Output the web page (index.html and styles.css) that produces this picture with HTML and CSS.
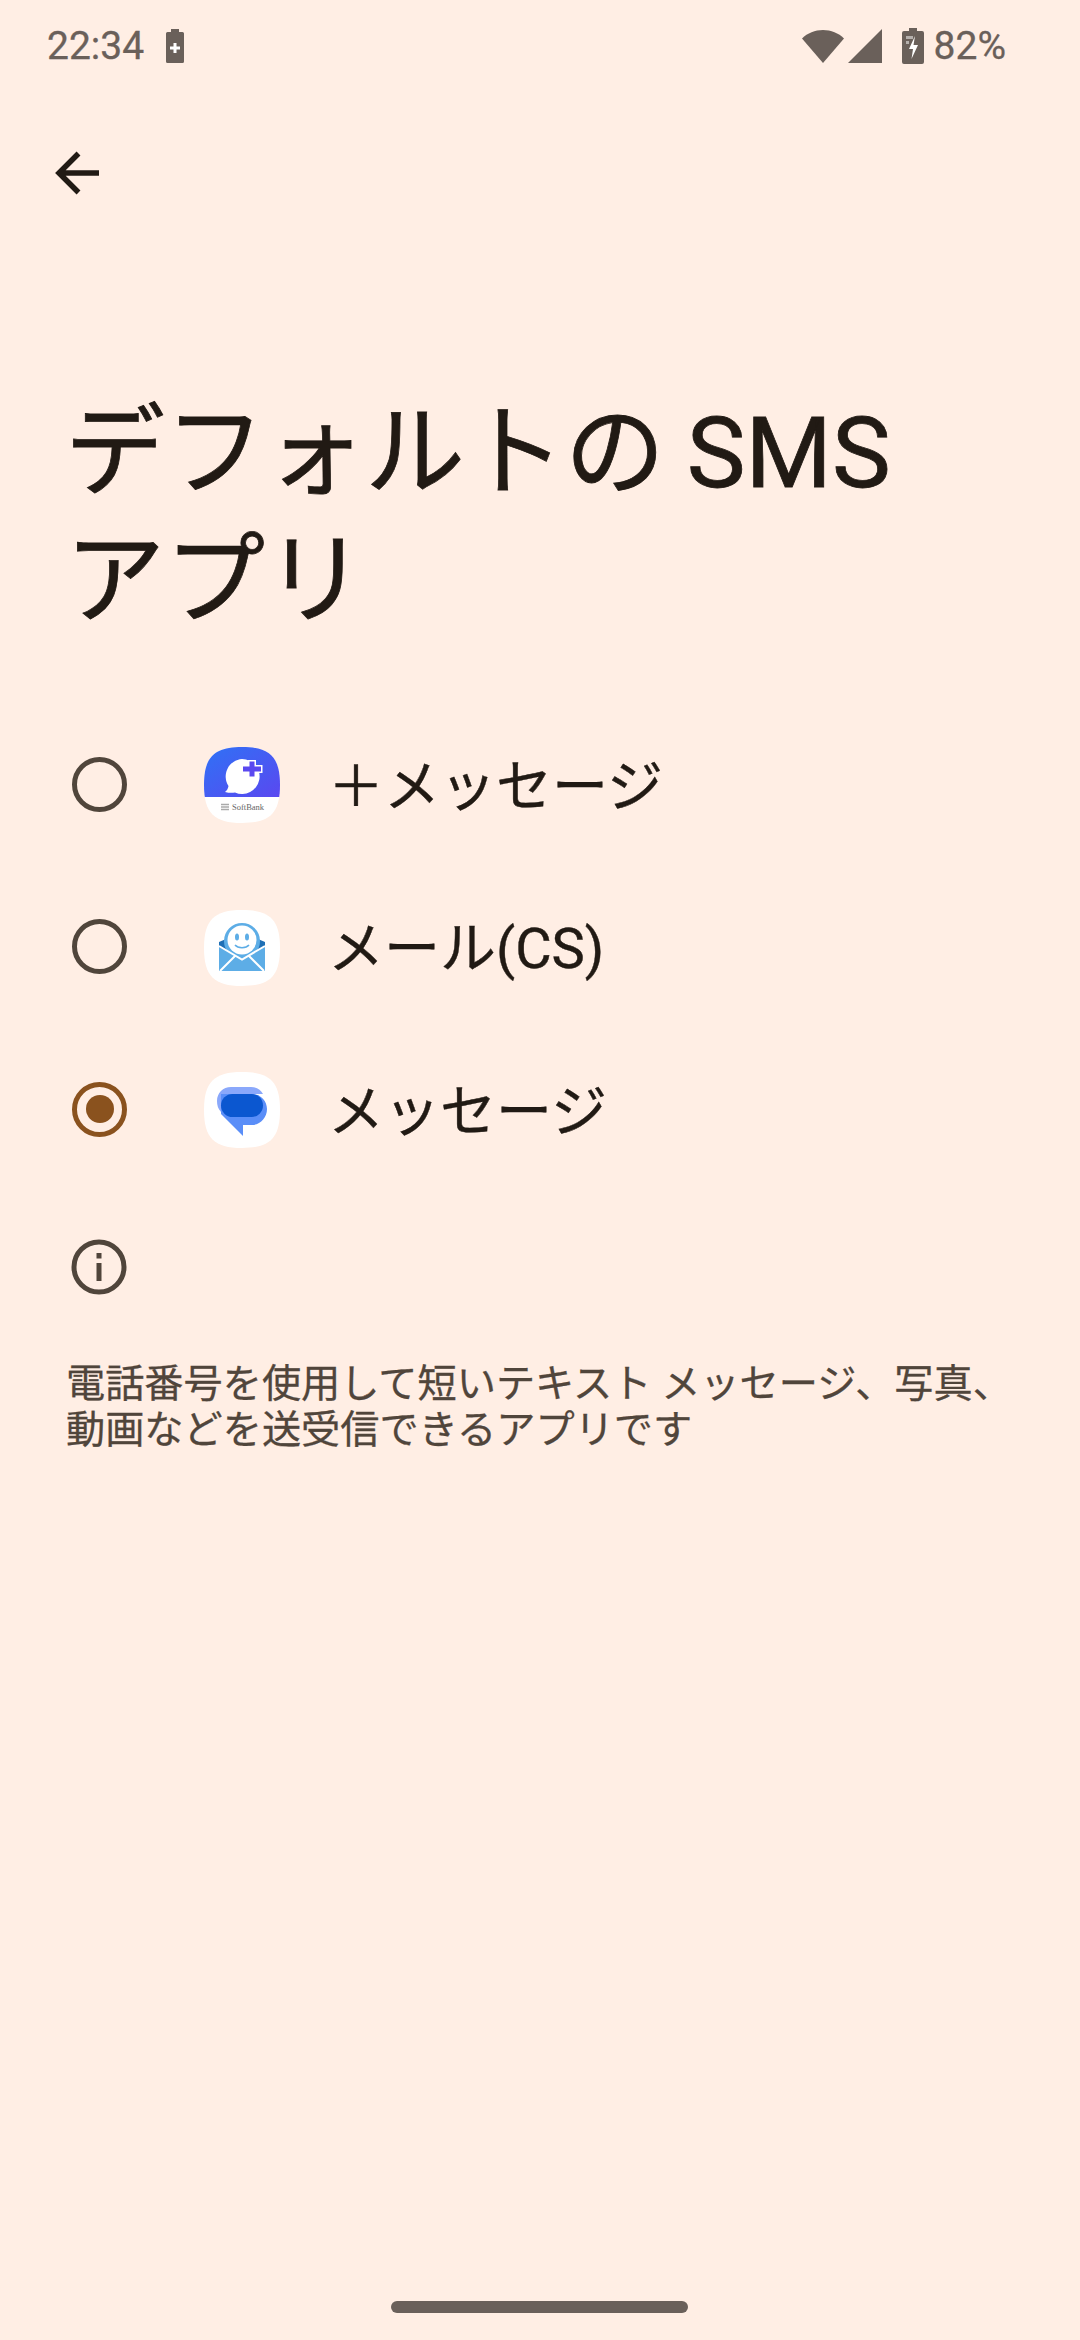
FILE: index.html
```html
<!DOCTYPE html>
<html lang="ja">
<head>
    <meta charset="UTF-8">
    <meta name="viewport" content="width=device-width, initial-scale=1.0">
    <title>デフォルトの SMS アプリ</title>
    <link rel="stylesheet" href="styles.css">
</head>
<body>
    <div class="screen">
        <!-- Status bar -->
        <div class="status-bar">
            <div class="status-left">
                <span class="status-time">22:34</span>
                <svg class="icon-charge" width="18" height="34" viewBox="0 0 18 34">
                    <path d="M5 0h8v3h3.500a1.500 1.500 0 0 1 1.500 1.500V32.500a1.500 1.500 0 0 1-1.500 1.500H1.500A1.500 1.500 0 0 1 0 32.500V4.500A1.500 1.500 0 0 1 1.500 3H5z" fill="#6a605a"/>
                    <path d="M7.500 14h3v3.500H14v3h-3.500V24h-3v-3.500H4v-3h3.500z" fill="#fff"/>
                </svg>
            </div>
            <div class="status-right">
                <svg width="42" height="34" viewBox="0 0 42 34">
                    <path d="M0 9.500C5.500 4 13 1 21 1s15.500 3 21 8.500L21 34z" fill="#6a605a"/>
                </svg>
                <svg class="icon-signal" width="34" height="34" viewBox="0 0 34 34">
                    <path d="M34 0v34H0z" fill="#6a605a"/>
                </svg>
                <svg class="icon-battery" width="22" height="36" viewBox="0 0 22 36">
                    <path d="M7 0h8v3h5a2 2 0 0 1 2 2v29a2 2 0 0 1-2 2H2a2 2 0 0 1-2-2V5a2 2 0 0 1 2-2h5z" fill="#6a605a"/>
                    <path d="M4 8h7v3H4zM4 13h3v3H4z" fill="#fff" opacity="0.5"/>
                    <path d="M13 8 7 21h4l-1.500 10L16 17h-4.500z" fill="#fff"/>
                </svg>
                <span class="status-battery">82%</span>
            </div>
        </div>

        <!-- Back button -->
        <div class="toolbar">
            <svg width="46" height="46" viewBox="0 0 46 46">
                <path d="M45 23H5M24.500 3.500 5 23l19.500 19.500" fill="none" stroke="#211a14" stroke-width="5.500"/>
            </svg>
        </div>

        <h1 class="title">デフォルトの <span class="title-latin">SMS</span> アプリ</h1>

        <!-- App list -->
        <div class="app-list">
            <div class="app-row">
                <span class="radio"></span>
                <svg class="app-icon" width="76" height="76" viewBox="0 0 76 76">
                    <defs>
                        <linearGradient id="sbGrad" x1="0" y1="0" x2="1" y2="1">
                            <stop offset="0" stop-color="#2f72f5"/>
                            <stop offset="1" stop-color="#5a48f0"/>
                        </linearGradient>
                        <clipPath id="squircle">
                            <path d="M38 0C66 0 76 10 76 38S66 76 38 76 0 66 0 38 10 0 38 0z"/>
                        </clipPath>
                    </defs>
                    <g clip-path="url(#squircle)">
                        <rect width="76" height="76" fill="#fff"/>
                        <rect width="76" height="50" fill="url(#sbGrad)"/>
                    </g>
                    <path d="M38 12a17.500 17.500 0 1 1-7 33.500c-3 .5-6 .5-10-.5 2-1.500 3-3.500 3.500-6A17.500 17.500 0 0 1 38 12z" fill="#fff"/>
                    <path d="M45.500 14.500h5v5h6.500v5h-6.500v5h-5v-5H39v-5h6.500z" fill="#5a48f0" stroke="#fff" stroke-width="3" paint-order="stroke"/>
                    <path d="M17 57.500h8M17 60h8M17 62.500h8" stroke="#aaa" stroke-width="1.500"/>
                    <text class="softbank" x="28" y="63">SoftBank</text>
                </svg>
                <span class="app-label">＋メッセージ</span>
            </div>
            <div class="app-row">
                <span class="radio"></span>
                <svg class="app-icon" width="76" height="76" viewBox="0 0 76 76">
                    <path d="M38 0C66 0 76 10 76 38S66 76 38 76 0 66 0 38 10 0 38 0z" fill="#fff"/>
                    <path d="M15 32l7-3h32l7 3v8H15z" fill="#1f6fb5"/>
                    <circle cx="38" cy="31" r="18" fill="#5dade6"/>
                    <circle cx="38" cy="30" r="14.500" fill="#fff"/>
                    <ellipse cx="33" cy="27" rx="2" ry="3.500" fill="#5dade6"/>
                    <ellipse cx="43" cy="27" rx="2" ry="3.500" fill="#5dade6"/>
                    <path d="M31 35c3 3.500 11 3.500 14 0" fill="none" stroke="#5dade6" stroke-width="1.500"/>
                    <path d="M15 36l23 13 23-13v25H15z" fill="#5dade6"/>
                    <path d="M15 36l23 13.500L61 36M16 61l15-15M60 61 45 46" fill="none" stroke="#fff" stroke-width="2"/>
                </svg>
                <span class="app-label">メール(CS)</span>
            </div>
            <div class="app-row">
                <span class="radio selected"></span>
                <svg class="app-icon" width="76" height="76" viewBox="0 0 76 76">
                    <path d="M38 0C66 0 76 10 76 38S66 76 38 76 0 66 0 38 10 0 38 0z" fill="#fff"/>
                    <path d="M27 15h20c6 0 10 3 12 7H17v18c-3-3-4-7-4-11 0-8 6-14 14-14z" fill="#8aa8fb"/>
                    <path d="M48 22c8 0 15 6 15 15s-7 16-15 16H39v11L17 42V22z" fill="#5a8ef8"/>
                    <rect x="17" y="22" width="42" height="23" rx="11.500" fill="#0b57d0"/>
                </svg>
                <span class="app-label">メッセージ</span>
            </div>
        </div>

        <!-- Footer info -->
        <div class="info">
            <svg width="56" height="56" viewBox="0 0 56 56">
                <circle cx="28" cy="28" r="25" fill="none" stroke="#50453b" stroke-width="5"/>
                <path d="M25.500 14h5v5.500h-5zM25.500 24h5v18h-5z" fill="#50453b"/>
            </svg>
            <p class="info-text">電話番号を使用して短いテキスト メッセージ、写真、<br>動画などを送受信できるアプリです</p>
        </div>

        <div class="home-indicator"></div>
    </div>
</body>
</html>
```

FILE: styles.css
```css
body {
    margin: 0;
    background-color: #ffeee4;
    font-family: Roboto, "Noto Sans CJK JP", sans-serif;
    color: #211a14;
}

.screen {
    position: relative;
    width: 1080px;
    height: 2340px;
    overflow: hidden;
}

.status-bar {
    display: flex;
    justify-content: space-between;
    align-items: center;
    height: 34px;
    padding: 29px 74px 0 47px;
    color: #6a605a;
    font-size: 39px;
    -webkit-text-stroke: 0.3px;
}

.status-left,
.status-right {
    display: flex;
    align-items: center;
}

.icon-charge {
    margin-left: 22px;
}

.icon-signal {
    margin-left: 4px;
}

.icon-battery {
    margin-left: 20px;
}

.status-battery {
    margin-left: 10px;
}

.toolbar {
    display: flex;
    padding: 87px 0 0 54px;
    height: 46px;
}

.title {
    width: 900px;
    margin: 193px 0 0 65px;
    font-size: 100px;
    font-weight: 400;
    line-height: 127px;
    -webkit-text-stroke: 0.8px;
}

.title-latin {
    margin-left: -3px;
    font-size: 99px;
}

.app-list {
    margin-top: 59px;
}

.app-row {
    display: flex;
    align-items: center;
    height: 162.5px;
    padding-left: 72px;
}

.radio {
    width: 55px;
    height: 55px;
    box-sizing: border-box;
    border: 5px solid #50453b;
    border-radius: 50%;
    display: flex;
    justify-content: center;
    align-items: center;
}

.radio.selected {
    border-color: #8a521e;
}

.radio.selected:before {
    content: '';
    width: 28px;
    height: 28px;
    background: #8a521e;
    border-radius: 50%;
}

.app-icon {
    margin-left: 77px;
    margin-top: 2px;
}

.softbank {
    font-family: "Liberation Serif", serif;
    font-size: 8.5px;
    fill: #666;
}

.app-label {
    margin-left: 48px;
    padding-bottom: 6px;
    font-size: 56px;
    -webkit-text-stroke: 0.4px;
}

.info {
    padding: 48px 66px 0 66px;
}

.info svg {
    display: block;
    margin-left: 5px;
}

.info-text {
    margin: 66px 0 0 0;
    font-size: 39.2px;
    line-height: 46px;
    color: #50453b;
    white-space: nowrap;
    -webkit-text-stroke: 0.3px;
}

.home-indicator {
    position: absolute;
    left: 391px;
    top: 2301px;
    width: 297px;
    height: 12px;
    background: #6a605a;
    border-radius: 6px;
}
```
